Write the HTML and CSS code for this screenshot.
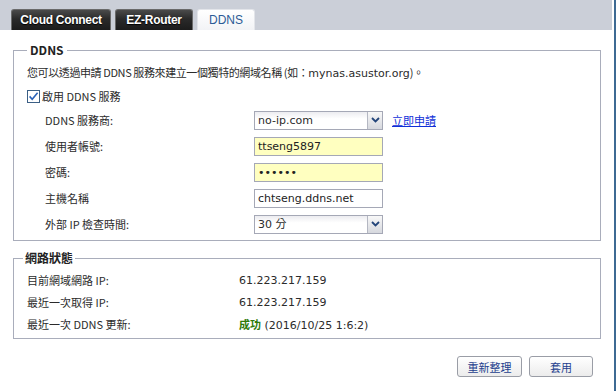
FILE: index.html
```html
<!DOCTYPE html>
<html>
<head>
<meta charset="utf-8">
<link rel="stylesheet" href="styles.css">
</head>
<body>
<div class="app">
  <div class="main">
    <div class="tabbar">
      <div class="tab dark tab-cloud">Cloud Connect</div>
      <div class="tab dark tab-ez">EZ-Router</div>
      <div class="tab active">DDNS</div>
    </div>
    <div class="content">
      <fieldset class="box box-ddns">
        <legend class="legend">DDNS</legend>
        <div class="intro">您可以透過申請 DDNS 服務來建立一個獨特的網域名稱 (如：<span class="latin">mynas.asustor.org</span>)。</div>
        <div class="check-row">
          <svg class="check" width="13" height="13" viewBox="0 0 13 13">
            <rect x="0.5" y="0.5" width="12" height="12" fill="#fff" stroke="#3b5f85"/>
            <path d="M2.6 6.4 L5.2 9.2 L10.6 2.8" fill="none" stroke="#2a62b8" stroke-width="1.6"/>
          </svg>
          <span>啟用 DDNS 服務</span>
        </div>
        <div class="form">
          <div class="row">
            <div class="label">DDNS 服務商:</div>
            <div class="select"><span class="sel-text">no-ip.com</span><span class="arrow"><svg width="9" height="6" viewBox="0 0 9 6"><path d="M1 1 L4.5 4.5 L8 1" fill="none" stroke="#23457a" stroke-width="1.8"/></svg></span></div>
            <a class="link" href="#">立即申請</a>
          </div>
          <div class="row">
            <div class="label">使用者帳號:</div>
            <input class="field yellow" value="ttseng5897">
          </div>
          <div class="row">
            <div class="label">密碼:</div>
            <input class="field yellow" type="password" value="123456">
          </div>
          <div class="row">
            <div class="label">主機名稱</div>
            <input class="field" value="chtseng.ddns.net">
          </div>
          <div class="row">
            <div class="label">外部 IP 檢查時間:</div>
            <div class="select"><span class="sel-text">30 分</span><span class="arrow"><svg width="9" height="6" viewBox="0 0 9 6"><path d="M1 1 L4.5 4.5 L8 1" fill="none" stroke="#23457a" stroke-width="1.8"/></svg></span></div>
          </div>
        </div>
      </fieldset>
      <fieldset class="box box-status">
        <legend class="legend legend-status">網路狀態</legend>
        <div class="srow"><div class="slabel">目前網域網路 IP:</div><div class="sval">61.223.217.159</div></div>
        <div class="srow"><div class="slabel">最近一次取得 IP:</div><div class="sval">61.223.217.159</div></div>
        <div class="srow"><div class="slabel">最近一次 DDNS 更新:</div><div class="sval"><span class="ok">成功</span> (2016/10/25 1:6:2)</div></div>
      </fieldset>
      <div class="buttons">
        <button class="btn btn-refresh">重新整理</button>
        <button class="btn btn-apply">套用</button>
      </div>
    </div>
  </div>
  <div class="edge"></div>
</div>
</body>
</html>
```

FILE: styles.css
```css
html, body {
  margin: 0;
  padding: 0;
  background: #fff;
}
body {
  font-family: "Noto Sans CJK TC", sans-serif;
  font-size: 11px;
  color: #2b2b2b;
}
.latin {
  font-family: "DejaVu Sans", "Noto Sans CJK TC", sans-serif;
  letter-spacing: 0;
}
.app {
  display: flex;
  width: 616px;
  height: 391px;
}
.main {
  width: 612px;
  display: flex;
  flex-direction: column;
}
.edge {
  width: 2px;
  margin-left: 2px;
  background: #3e6a93;
}
.tabbar {
  height: 30px;
  background: #cbcfd8;
  display: flex;
  align-items: flex-end;
  padding-left: 11px;
  gap: 4px;
  box-sizing: border-box;
}
.tab {
  height: 21px;
  box-sizing: border-box;
  border-radius: 3px 3px 0 0;
  display: flex;
  align-items: center;
  justify-content: center;
  font-family: "Liberation Sans", "Noto Sans CJK TC", sans-serif;
}
.dark {
  background: linear-gradient(#4a4a4a, #2a2a2a 45%, #1c1c1c);
  border: 1px solid #6a6a6a;
  border-bottom: none;
  color: #fff;
  font-weight: bold;
  font-size: 12px;
  letter-spacing: -0.3px;
  text-shadow: 0 1px 1px #000;
}
.tab-cloud { width: 100px; }
.tab-ez { width: 78px; }
.active {
  width: 58px;
  background: linear-gradient(#ffffff, #f2f3f6);
  border: 1px solid #e3e5ea;
  border-bottom: none;
  color: #2c5b96;
  font-size: 12px;
}
.content {
  padding: 20px 0 0 13px;
}
.box {
  margin: 0;
  width: 588px;
  box-sizing: border-box;
  border: 1px solid #a9adbb;
  padding: 0 0 0 13px;
  min-width: 0;
}
.legend {
  padding: 0 3px;
  font-weight: bold;
  font-size: 12px;
  line-height: 14px;
  color: #222;
}
.box-ddns {
  margin-top: -7px;
  padding-top: 7px;
  padding-bottom: 3px;
}
.intro {
  line-height: 16px;
  height: 16px;
  letter-spacing: -0.4px;
}
.check-row {
  margin-top: 8px;
  height: 16px;
  display: flex;
  align-items: center;
  gap: 2px;
}
.check {
  display: block;
}
.form {
  padding-left: 18px;
  padding-top: 3px;
}
.row {
  height: 26px;
  display: flex;
  align-items: center;
}
.label {
  width: 209px;
}
.select {
  width: 129px;
  height: 19px;
  box-sizing: border-box;
  border: 1px solid #a5a8b6;
  background: linear-gradient(#ececf0, #ffffff 40%);
  display: flex;
  align-items: stretch;
}
.sel-text {
  flex: 1;
  padding-left: 3px;
  line-height: 17px;
  font-size: 11px;
  font-family: "DejaVu Sans", "Noto Sans CJK TC", sans-serif;
}
.arrow {
  width: 14px;
  border-left: 1px solid #b4b7c2;
  background: linear-gradient(#f8f8f8, #d6d8de);
  display: flex;
  align-items: center;
  justify-content: center;
}
.arrow svg { display: block; }
.link {
  margin-left: 9px;
  color: #1030d8;
  text-decoration: underline;
}
.field {
  width: 129px;
  height: 19px;
  box-sizing: border-box;
  border: 1px solid #a5a8b6;
  padding: 0 3px;
  margin: 0;
  font-family: "DejaVu Sans", "Noto Sans CJK TC", sans-serif;
  font-size: 11px;
  color: #222;
  background: #fff;
  outline: none;
}
.yellow {
  background: #ffffc0;
}
.box-status {
  margin-top: 10px;
  padding-top: 4px;
  padding-bottom: 3px;
}
.legend-status {
  margin-left: -4px;
  padding: 0 2px;
}
.srow {
  height: 22px;
  display: flex;
  align-items: center;
}
.slabel {
  width: 212px;
}
.sval {
  font-family: "DejaVu Sans", "Noto Sans CJK TC", sans-serif;
}
.ok {
  color: #2f7a0a;
  font-weight: bold;
  font-family: "Noto Sans CJK TC", sans-serif;
}
.buttons {
  display: flex;
  justify-content: flex-end;
  gap: 7px;
  width: 580px;
  margin-top: 17px;
}
.btn {
  height: 21px;
  box-sizing: border-box;
  border: 1px solid #9a9da6;
  border-radius: 3px;
  background: linear-gradient(#ffffff, #ececec);
  color: #1e3f8e;
  font-family: "Noto Sans CJK TC", sans-serif;
  font-size: 11px;
  padding: 0;
  line-height: 18px;
}
.btn-refresh { width: 65px; }
.btn-apply { width: 64px; }
```
